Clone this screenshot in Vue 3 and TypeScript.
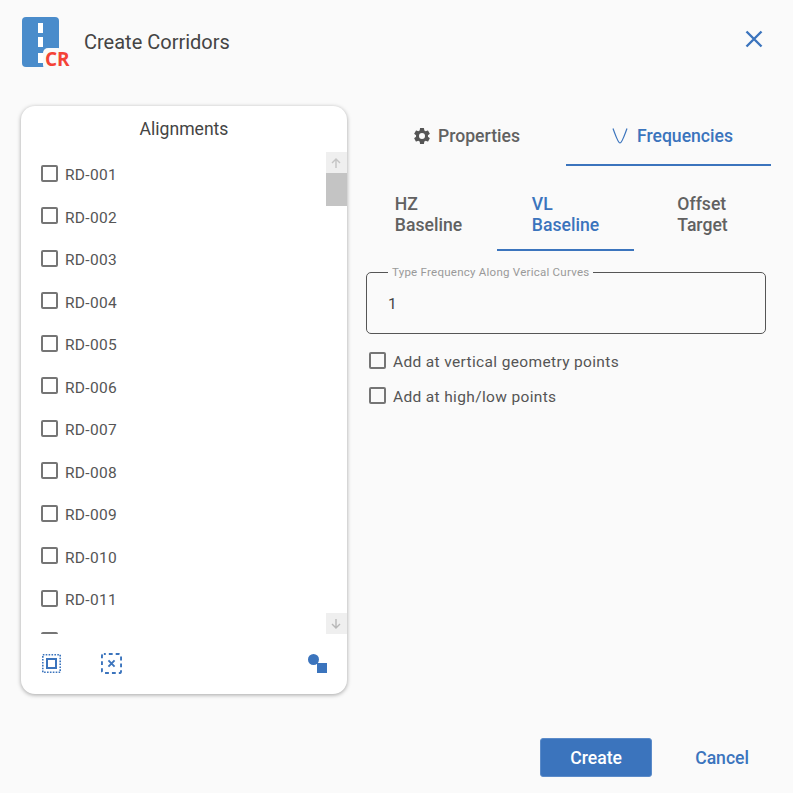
<template>
  <div class="dialog">
    <header class="dialog-header">
      <div class="title-wrap">
        <svg class="logo" width="52" height="52" viewBox="0 0 52 52">
          <rect x="1" y="1" width="37" height="50" rx="4" fill="#4a8ccb" />
          <rect x="17" y="7" width="5" height="10" fill="#fff" />
          <rect x="17" y="21" width="5" height="10" fill="#fff" />
          <rect x="17" y="37" width="5" height="10" fill="#fff" />
          <rect x="22" y="32" width="20" height="22" rx="5" fill="#fafafa" />
          <text x="24" y="50" class="logo-text">CR</text>
        </svg>
        <h1 class="title">Create Corridors</h1>
      </div>
      <button class="close" aria-label="Close">
        <svg width="20" height="20" viewBox="0 0 20 20">
          <path d="M2.5 2.5l15 15M17.5 2.5l-15 15" stroke="#3b74bd" stroke-width="2.4" fill="none" />
        </svg>
      </button>
    </header>

    <main class="dialog-body">
      <section class="card">
        <div class="card-title">Alignments</div>
        <div class="list-wrap">
          <ul class="list">
            <li v-for="item in alignments" :key="item" class="row">
              <span class="box"></span>
              <span class="label">{{ item }}</span>
            </li>
          </ul>
          <div class="scrollbar">
            <div class="arrow">
              <svg width="12" height="12" viewBox="0 0 12 12"><path d="M6 11V2M2 6l4-4 4 4" stroke="#c4c4c4" stroke-width="1.4" fill="none" /></svg>
            </div>
            <div class="track"><div class="thumb"></div></div>
            <div class="arrow">
              <svg width="12" height="12" viewBox="0 0 12 12"><path d="M6 1v9M2 6l4 4 4-4" stroke="#b8b8b8" stroke-width="1.4" fill="none" /></svg>
            </div>
          </div>
        </div>
        <div class="card-actions">
          <div class="actions-left">
            <svg width="19" height="19" viewBox="0 0 19 19">
              <rect x="0.8" y="0.8" width="17.4" height="17.4" fill="none" stroke="#3b74bd" stroke-width="1.6" stroke-dasharray="1.6 1.3" />
              <rect x="5" y="5" width="9" height="9" fill="none" stroke="#3b74bd" stroke-width="2" />
            </svg>
            <svg width="21" height="21" viewBox="0 0 22 22">
              <rect x="1" y="1" width="20" height="20" rx="2" fill="none" stroke="#3b74bd" stroke-width="2" stroke-dasharray="4 3.2" stroke-dashoffset="2" />
              <path d="M7.8 7.8l6.4 6.4M14.2 7.8l-6.4 6.4" stroke="#3b74bd" stroke-width="2" fill="none" />
            </svg>
          </div>
          <svg width="19" height="19" viewBox="0 0 19 19">
            <circle cx="5.5" cy="5.5" r="5.5" fill="#3b74bd" />
            <rect x="9" y="9" width="10" height="10" fill="#3b74bd" />
          </svg>
        </div>
      </section>

      <section class="panel">
        <nav class="tabs">
          <div class="tab tab-props">
            <svg width="20" height="20" viewBox="0 0 24 24">
              <path fill="#555" d="M19.14 12.94c.04-.3.06-.61.06-.94 0-.32-.02-.64-.07-.94l2.03-1.58a.49.49 0 0 0 .12-.61l-1.92-3.32a.488.488 0 0 0-.59-.22l-2.39.96c-.5-.38-1.03-.7-1.62-.94l-.36-2.54a.484.484 0 0 0-.48-.41h-3.84c-.24 0-.43.17-.47.41l-.36 2.54c-.59.24-1.13.57-1.62.94l-2.39-.96c-.22-.08-.47 0-.59.22L2.74 8.87c-.12.21-.08.47.12.61l2.03 1.58c-.05.3-.09.63-.09.94s.02.64.07.94l-2.03 1.58a.49.49 0 0 0-.12.61l1.92 3.32c.12.22.37.29.59.22l2.39-.96c.5.38 1.03.7 1.62.94l.36 2.54c.05.24.24.41.48.41h3.84c.24 0 .44-.17.47-.41l.36-2.54c.59-.24 1.13-.56 1.62-.94l2.39.96c.22.08.47 0 .59-.22l1.92-3.32c.12-.22.07-.47-.12-.61l-2.01-1.58zM12 15.6A3.6 3.6 0 1 1 12 8.4a3.6 3.6 0 0 1 0 7.2z" />
            </svg>
            <span>Properties</span>
          </div>
          <div class="tab tab-freq active">
            <svg width="16" height="16" viewBox="0 0 16 16">
              <path d="M1 .5C3.5 7 6 15 8 15S12.5 7 15 .5" stroke="#3b74bd" stroke-width="1.2" fill="none" />
            </svg>
            <span>Frequencies</span>
          </div>
        </nav>

        <nav class="subtabs">
          <div v-for="tab in subTabs" :key="tab.top" class="subtab" :class="{ active: tab.active }">
            <span>{{ tab.top }}<br />{{ tab.bottom }}</span>
          </div>
        </nav>

        <fieldset class="field">
          <legend>Type Frequency Along Verical Curves</legend>
          <span class="field-value">1</span>
        </fieldset>

        <label class="check">
          <span class="box"></span>
          <span class="label">Add at vertical geometry points</span>
        </label>
        <label class="check">
          <span class="box"></span>
          <span class="label">Add at high/low points</span>
        </label>
      </section>
    </main>

    <footer class="dialog-footer">
      <button class="btn-create">Create</button>
      <button class="btn-cancel">Cancel</button>
    </footer>
  </div>
</template>

<script setup lang="ts">
const alignments: string[] = Array.from({ length: 12 }, (_, i) => `RD-${String(i + 1).padStart(3, '0')}`)

const subTabs = [
  { top: 'HZ', bottom: 'Baseline', active: false },
  { top: 'VL', bottom: 'Baseline', active: true },
  { top: 'Offset', bottom: 'Target', active: false },
]
</script>

<style>
html,
body {
  margin: 0;
  background: #fafafa;
}
</style>

<style scoped>
.dialog {
  width: 793px;
  height: 793px;
  box-sizing: border-box;
  background: #fafafa;
  font-family: Roboto, "Liberation Sans", sans-serif;
  color: #555;
  display: flex;
  flex-direction: column;
  overflow: hidden;
}

.dialog-header {
  display: flex;
  justify-content: space-between;
  align-items: center;
  height: 52px;
  padding: 16px 29px 0 21px;
}

.title-wrap {
  display: flex;
  align-items: center;
  gap: 11px;
}

.logo {
  display: block;
  overflow: visible;
}

.logo-text {
  font-family: "Open Sans", sans-serif;
  font-weight: 700;
  font-size: 19px;
  fill: #f44336;
}

.title {
  margin: 0;
  font-size: 20px;
  font-weight: 400;
  color: #444;
}

.close {
  border: 0;
  background: none;
  padding: 0;
  display: flex;
  margin-top: -6px;
}

.dialog-body {
  display: flex;
  align-items: flex-start;
  padding: 38px 22px 0 21px;
  gap: 19px;
  flex: 1;
}

.card {
  width: 326px;
  height: 588px;
  box-sizing: border-box;
  flex: none;
  background: #fff;
  border-radius: 14px;
  box-shadow: 0 1px 4px rgba(0, 0, 0, 0.35);
  display: flex;
  flex-direction: column;
}

.card-title {
  height: 46px;
  padding-top: 13px;
  box-sizing: border-box;
  text-align: center;
  font-size: 17.6px;
  color: #444;
}

.list-wrap {
  display: flex;
  height: 482px;
}

.list {
  list-style: none;
  margin: 0;
  padding: 0;
  flex: 1;
  overflow: hidden;
}

.row {
  display: flex;
  align-items: center;
  gap: 7px;
  height: 42.5px;
  padding-left: 20px;
  font-size: 15.5px;
  letter-spacing: 0.3px;
}

.label {
  padding-top: 2px;
}

.row .label {
  padding-top: 4px;
}

.box {
  width: 17px;
  height: 17px;
  box-sizing: border-box;
  border: 2px solid #757575;
  border-radius: 2px;
  flex: none;
}

.scrollbar {
  width: 21px;
  display: flex;
  flex-direction: column;
}

.arrow {
  height: 21px;
  padding-right: 1px;
  box-sizing: border-box;
  background: #efefef;
  display: flex;
  align-items: center;
  justify-content: center;
  flex: none;
}

.track {
  flex: 1;
}

.thumb {
  height: 33px;
  background: #c4c4c4;
}

.card-actions {
  display: flex;
  justify-content: space-between;
  align-items: center;
  padding: 19px 20px 0 21px;
}

.actions-left {
  display: flex;
  align-items: center;
  gap: 40px;
}

.panel {
  flex: 1;
  min-width: 0;
}

.tabs {
  display: flex;
  height: 60px;
}

.tab {
  display: flex;
  align-items: center;
  justify-content: center;
  padding-top: 2px;
  font-size: 17.6px;
  font-weight: 500;
  color: #616161;
  border-bottom: 2px solid transparent;
  box-sizing: border-box;
}

.tab-props {
  width: 200px;
  gap: 6px;
}

.tab-freq {
  width: 205px;
  gap: 9px;
  padding-left: 8px;
}

.tab.active {
  color: #3b74bd;
  border-bottom-color: #3b74bd;
}

.subtabs {
  display: flex;
  height: 85px;
  margin-left: -6px;
}

.subtab {
  flex: 1;
  display: flex;
  align-items: center;
  justify-content: center;
  padding-top: 14px;
  box-sizing: border-box;
  font-size: 17.6px;
  font-weight: 500;
  line-height: 21px;
  color: #616161;
  border-bottom: 2px solid transparent;
}

.subtab.active {
  color: #3b74bd;
  border-bottom-color: #3b74bd;
}

.field {
  margin: 15px 5px 0 0;
  padding: 0 0 0 21px;
  height: 68px;
  box-sizing: border-box;
  border: 1px solid #555;
  border-radius: 5px;
  min-width: 0;
}

.field legend {
  padding: 0 4px;
  font-size: 11.5px;
  line-height: 13px;
  letter-spacing: 0.25px;
  color: #999;
}

.field-value {
  display: block;
  margin-top: 15px;
  font-size: 15.5px;
  line-height: 20px;
  color: #444;
}

.check {
  display: flex;
  align-items: center;
  gap: 7px;
  height: 35px;
  padding-left: 3px;
  font-size: 15.5px;
  letter-spacing: 0.35px;
}

.field + .check {
  margin-top: 9px;
}

.dialog-footer {
  display: flex;
  justify-content: flex-end;
  align-items: center;
  padding: 0 44px 16px 0;
  gap: 43px;
}

.btn-create {
  width: 112px;
  height: 39px;
  border: 1px solid #5b8bc9;
  border-radius: 3px;
  background: #3b74bd;
  color: #fff;
  font: 500 17.6px Roboto, sans-serif;
}

.btn-cancel {
  border: 0;
  background: none;
  padding: 0;
  color: #3b74bd;
  font: 500 17.6px Roboto, sans-serif;
}
</style>
